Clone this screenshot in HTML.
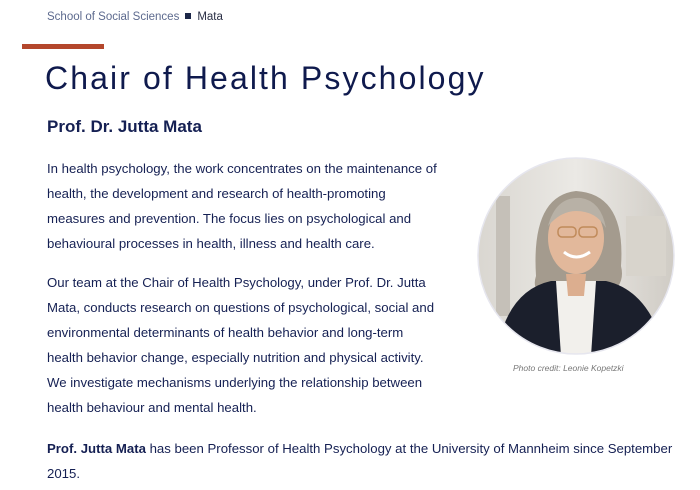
<!DOCTYPE html>
<html><head><style>
body{margin:0;width:700px;height:490px;background:#fff;font-family:"Liberation Sans",sans-serif;color:#152053;position:relative;overflow:hidden}
.a{position:absolute}
.bc{left:47px;top:11px;font-size:11.5px;color:#5d6a8e}
.bc b{display:inline-block;width:6px;height:6px;background:#1d2748;margin:0 6px 1px 6px;vertical-align:middle}
.bc span{color:#2a2f45}
.bar{left:22px;top:44px;width:82px;height:5px;background:#b4472c}
h1{position:absolute;left:45px;top:60px;margin:0;font-weight:normal;font-size:32px;letter-spacing:2.1px;color:#0f1a4d}
h2{position:absolute;left:47px;top:117px;margin:0;font-size:17px;color:#152053}
p{position:absolute;margin:0;font-size:13.2px;line-height:25px;color:#152053}
.cap{left:513px;top:363px;font-size:8.5px;font-style:italic;color:#777}
</style></head><body>
<div class="a bc">School of Social Sciences<b></b><span>Mata</span></div>
<div class="a bar"></div>
<h1>Chair of Health Psychology</h1>
<h2>Prof. Dr. Jutta Mata</h2>
<p style="left:47px;top:156px;width:420px">In health psychology, the work concentrates on the maintenance of<br>health, the development and research of health-promoting<br>measures and prevention. The focus lies on psychological and<br>behavioural processes in health, illness and health care.</p>
<p style="left:47px;top:270px;width:420px">Our team at the Chair of Health Psychology, under Prof. Dr. Jutta<br>Mata, conducts research on questions of psychological, social and<br>environmental determinants of health behavior and long-term<br>health behavior change, especially nutrition and physical activity.<br>We investigate mechanisms underlying the relationship between<br>health behaviour and mental health.</p>
<p style="left:47px;top:436px;width:650px"><b>Prof. Jutta Mata</b> has been Professor of Health Psychology at the University of Mannheim since September<br>2015.</p>
<svg class="a" style="left:476px;top:156px" width="200" height="200" viewBox="0 0 200 200">
<defs><clipPath id="c"><circle cx="100" cy="100" r="98"/></clipPath>
<linearGradient id="bg" x1="0" x2="1"><stop offset="0" stop-color="#d9d6d0"/><stop offset=".5" stop-color="#ebe9e5"/><stop offset="1" stop-color="#cfcbc4"/></linearGradient></defs>
<g clip-path="url(#c)">
<rect width="200" height="200" fill="url(#bg)"/>
<rect x="20" y="40" width="14" height="120" fill="#c5c0b8"/>
<rect x="150" y="60" width="40" height="60" fill="#d8d4cc"/>
<path d="M60 120 Q55 40 100 35 Q150 38 145 110 Q150 130 130 140 L70 140 Q55 135 60 120Z" fill="#a49b8e"/>
<ellipse cx="100" cy="82" rx="28" ry="36" fill="#e2b89b"/>
<path d="M72 70 Q80 40 105 42 Q125 45 130 72 Q120 55 100 55 Q85 55 72 70Z" fill="#b8b1a6"/>
<rect x="82" y="71" width="18" height="10" rx="4" fill="none" stroke="#c08a5a" stroke-width="1.5"/>
<rect x="103" y="71" width="18" height="10" rx="4" fill="none" stroke="#c08a5a" stroke-width="1.5"/>
<path d="M88 96 Q100 106 114 96" stroke="#fff" stroke-width="3" fill="none"/>
<path d="M20 200 Q30 135 75 125 L130 125 Q175 135 190 200Z" fill="#1b1f2c"/>
<path d="M80 125 L120 125 L115 200 L85 200Z" fill="#f2f0ec"/>
<path d="M90 118 L110 118 L108 140 L92 140Z" fill="#dcae8f"/>
</g>
<circle cx="100" cy="100" r="98" fill="none" stroke="#e6e6ee" stroke-width="1.5"/>
</svg>
<div class="a cap">Photo credit: Leonie Kopetzki</div>
</body></html>
